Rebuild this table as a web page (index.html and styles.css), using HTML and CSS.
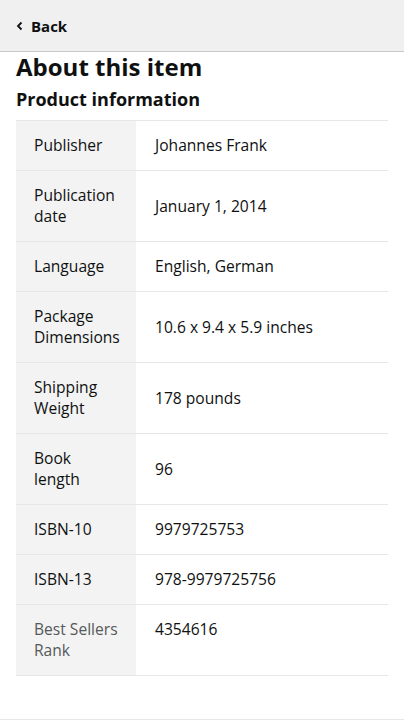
FILE: index.html
```html
<!DOCTYPE html>
<html lang="en">
<head>
  <meta charset="UTF-8">
  <title>About this item</title>
  <link rel="stylesheet" href="styles.css">
</head>
<body>

  <div class="top-bar">
    <a class="back" href="#">
      <svg width="7" height="10" viewBox="0 0 7 10"><path d="M5.5 1.5 L2 5 L5.5 8.5" fill="none" stroke="#0f1111" stroke-width="1.8"/></svg>
      Back
    </a>
  </div>

  <div class="content">
    <h1>About this item</h1>
    <h2>Product information</h2>

    <table class="info">
      <tr><th>Publisher</th><td>Johannes Frank</td></tr>
      <tr><th>Publication date</th><td>January 1, 2014</td></tr>
      <tr><th>Language</th><td>English, German</td></tr>
      <tr><th>Package Dimensions</th><td>10.6 x 9.4 x 5.9 inches</td></tr>
      <tr><th>Shipping Weight</th><td>178 pounds</td></tr>
      <tr><th>Book length</th><td>96</td></tr>
      <tr><th>ISBN-10</th><td>9979725753</td></tr>
      <tr><th>ISBN-13</th><td>978-9979725756</td></tr>
      <tr class="rank"><th>Best Sellers Rank</th><td>4354616</td></tr>
    </table>
  </div>

  <div class="bottom-line"></div>

</body>
</html>
```

FILE: styles.css
```css
* {
  margin: 0;
  padding: 0;
  box-sizing: border-box;
  font-family: 'Open Sans', sans-serif;
}

body {
  background: white;
  color: #0f1111;
  width: 404px;
  height: 720px;
  display: flex;
  flex-direction: column;
}

.top-bar {
  background: #f0f0f0;
  height: 52px;
  border-bottom: 1px solid #c8c8c8;
  display: flex;
  align-items: center;
  padding-left: 16px;
}

.back {
  color: #0f1111;
  text-decoration: none;
  font-weight: bold;
  font-size: 15px;
  display: flex;
  align-items: center;
  gap: 8px;
}

.content {
  padding: 0 16px;
  flex: 1;
}

h1 {
  font-size: 24px;
  line-height: 30px;
  margin-top: 0;
}

h2 {
  font-size: 18px;
  line-height: 26px;
  margin-top: 4px;
  margin-bottom: 8px;
}

.info {
  width: 100%;
  border-collapse: collapse;
  border-top: 1px solid #e7e7e7;
  font-size: 15.6px;
  line-height: 21px;
}

.info tr {
  border-bottom: 1px solid #e7e7e7;
}

.info th {
  background: #f3f3f3;
  width: 120px;
  text-align: left;
  font-weight: normal;
  padding: 14px 16px 14px 18px;
  vertical-align: middle;
}

.info td {
  padding: 14px 10px 14px 19px;
  vertical-align: middle;
}

.info .rank th {
  color: #565959;
}

.info .rank td {
  vertical-align: top;
}

.bottom-line {
  border-bottom: 1px solid #e7e7e7;
  height: 4px;
}
```
